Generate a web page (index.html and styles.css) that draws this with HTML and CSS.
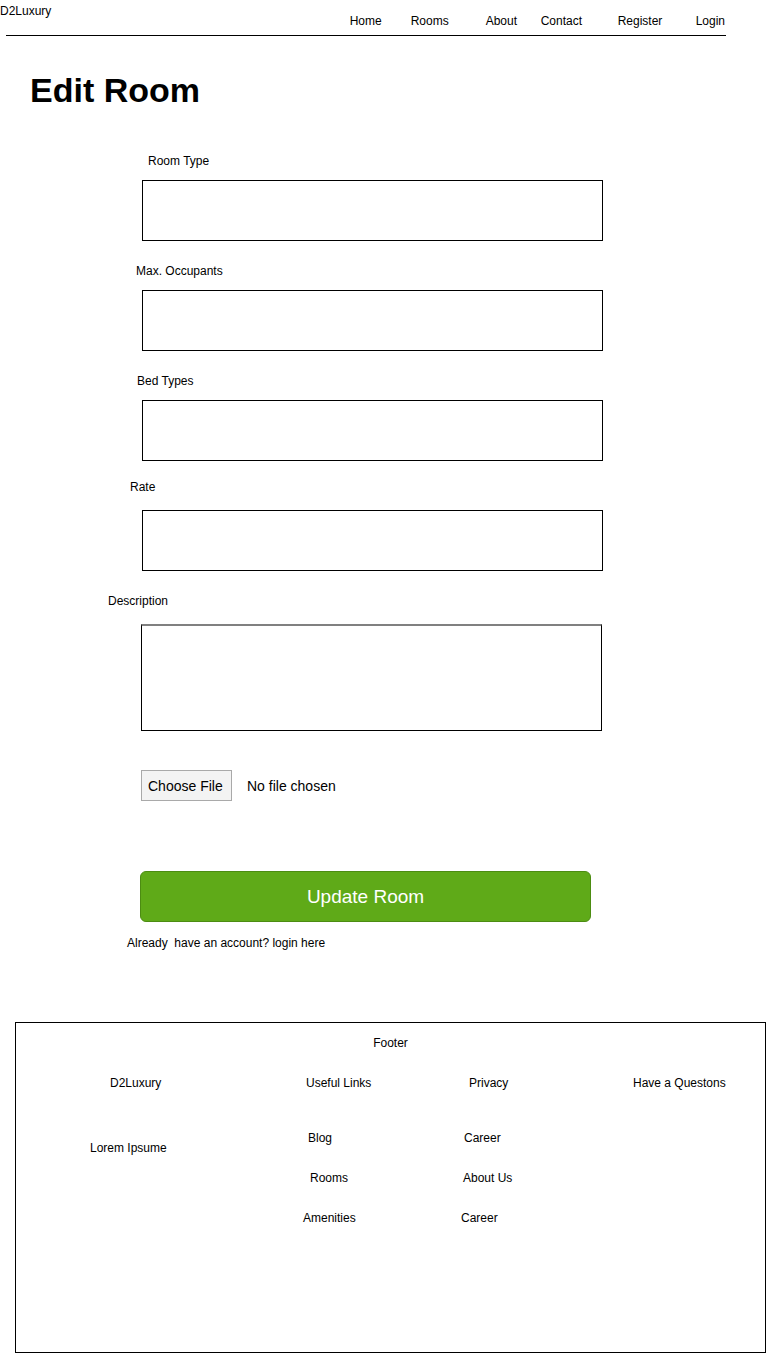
FILE: index.html
```html
<!DOCTYPE html>
<html lang="en">
<head>
<meta charset="utf-8">
<title>Edit Room - D2Luxury</title>
<link rel="stylesheet" href="styles.css">
</head>
<body>
<header class="site-header">
  <div class="brand">D2Luxury</div>
  <nav class="main-nav">
    <a href="#">Home</a>
    <a href="#">Rooms</a>
    <a href="#">About</a>
    <a href="#">Contact</a>
    <a href="#">Register</a>
    <a href="#">Login</a>
  </nav>
</header>
<div class="divider"></div>

<main class="page">
  <h1 class="page-title">Edit Room</h1>
  <form class="room-form">
    <div class="field field-first">
      <label class="field-label label-type">Room Type</label>
      <input class="text-input" type="text">
    </div>
    <div class="field">
      <label class="field-label label-occupants">Max. Occupants</label>
      <input class="text-input" type="text">
    </div>
    <div class="field">
      <label class="field-label label-beds">Bed Types</label>
      <input class="text-input" type="text">
    </div>
    <div class="field field-rate">
      <label class="field-label label-rate">Rate</label>
      <input class="text-input" type="text">
    </div>
    <div class="field field-desc">
      <label class="field-label label-desc">Description</label>
      <textarea class="text-area"></textarea>
    </div>
    <div class="file-row">
      <span class="file-button">Choose File</span>
      <span class="file-status">No file chosen</span>
    </div>
    <button type="button" class="submit-button">Update Room</button>
    <p class="login-hint">Already&nbsp; have an account? login here</p>
  </form>
</main>

<footer class="site-footer">
  <div class="footer-title">Footer</div>
  <div class="footer-grid">
    <div class="footer-col">
      <div class="footer-head indent-20">D2Luxury</div>
      <div class="footer-text">Lorem Ipsume</div>
    </div>
    <div class="footer-col">
      <div class="footer-head indent-3">Useful Links</div>
      <ul class="footer-list">
        <li class="indent-5">Blog</li>
        <li class="indent-7">Rooms</li>
        <li>Amenities</li>
      </ul>
    </div>
    <div class="footer-col">
      <div class="footer-head indent-8">Privacy</div>
      <ul class="footer-list">
        <li class="indent-3">Career</li>
        <li class="indent-2">About Us</li>
        <li>Career</li>
      </ul>
    </div>
    <div class="footer-col">
      <div class="footer-head">Have a Questons</div>
    </div>
  </div>
</footer>
</body>
</html>
```

FILE: styles.css
```css
* {
  box-sizing: border-box;
}

html, body {
  margin: 0;
  padding: 0;
  background: #ffffff;
}

body {
  font-family: "Liberation Sans", Arial, sans-serif;
  font-size: 12px;
  line-height: 14px;
  color: #000;
  width: 766px;
}

a {
  color: #000;
  text-decoration: none;
}

/* Header */
.site-header {
  height: 35px;
  display: flex;
  justify-content: space-between;
  align-items: flex-start;
  padding-right: 41px;
}

.brand {
  padding-top: 4px;
}

.main-nav {
  display: grid;
  grid-template-columns: 61px 75px 55px 77px 78px auto;
  padding-top: 14px;
}

.divider {
  margin-left: 6px;
  width: 720px;
  height: 1px;
  background: #000;
}

/* Page */
.page-title {
  margin: 35px 0 0 30px;
  font-size: 34px;
  line-height: 39px;
  font-weight: bold;
}

.room-form {
  padding-left: 108px;
  display: flex;
  flex-direction: column;
  align-items: flex-start;
}

.field {
  margin-top: 23px;
  display: flex;
  flex-direction: column;
  align-items: flex-start;
}

.field-first {
  margin-top: 44px;
}

.field-rate {
  margin-top: 19px;
}

.field-label {
  display: block;
  margin-bottom: 12px;
}

.field-rate .field-label,
.field-desc .field-label {
  margin-bottom: 16px;
}

.label-type { margin-left: 40px; }
.label-occupants { margin-left: 28px; }
.label-beds { margin-left: 29px; }
.label-rate { margin-left: 22px; }
.label-desc { margin-left: 0; }

.text-input {
  display: block;
  margin: 0 0 0 34px;
  width: 461px;
  height: 61px;
  border: 1px solid #000;
  padding: 0 6px;
  font-family: inherit;
  font-size: 13px;
  background: #fff;
  outline: none;
}

.text-area {
  display: block;
  margin: 0 0 0 33px;
  width: 461px;
  height: 107px;
  border: 1px solid #000;
  border-top: 2px solid #808080;
  padding: 4px 6px;
  font-family: inherit;
  font-size: 13px;
  resize: none;
  outline: none;
}

.file-row {
  margin: 39px 0 0 33px;
  display: flex;
  align-items: center;
  font-size: 14px;
  line-height: 16px;
}

.file-button {
  display: flex;
  align-items: center;
  height: 31px;
  width: 91px;
  padding-left: 6px;
  border: 1px solid #a9a9a9;
  background: #f3f3f3;
}

.file-status {
  margin-left: 15px;
}

.submit-button {
  margin: 70px 0 0 32px;
  width: 451px;
  height: 51px;
  border: 1px solid #4c8c12;
  border-radius: 6px;
  background: #5faa18;
  color: #fff;
  font-family: inherit;
  font-size: 19px;
  line-height: 22px;
  padding: 0;
  cursor: pointer;
}

.login-hint {
  margin: 14px 0 0 19px;
}

/* Footer */
.site-footer {
  margin: 72px 0 0 15px;
  width: 751px;
  height: 331px;
  border: 1px solid #000;
  padding-top: 13px;
}

.footer-title {
  text-align: center;
}

.footer-grid {
  margin-top: 26px;
  padding-left: 74px;
  display: grid;
  grid-template-columns: 213px 158px 172px auto;
}

.footer-text {
  margin-top: 51px;
}

.footer-list {
  list-style: none;
  margin: 0;
  padding: 0;
}

.footer-list li {
  margin-top: 26px;
}

.footer-list li:first-child {
  margin-top: 41px;
}

.indent-2 { padding-left: 2px; }
.indent-3 { padding-left: 3px; }
.indent-5 { padding-left: 5px; }
.indent-7 { padding-left: 7px; }
.indent-8 { padding-left: 8px; }
.indent-20 { padding-left: 20px; }
```
